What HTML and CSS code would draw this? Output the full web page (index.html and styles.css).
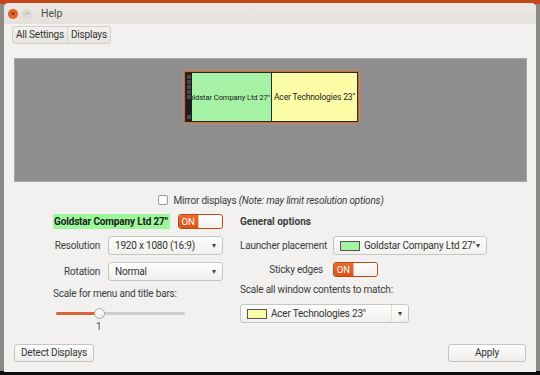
FILE: index.html
```html
<!DOCTYPE html>
<html>
<head>
<meta charset="utf-8">
<link rel="stylesheet" href="styles.css">
</head>
<body>
<div class="window">
  <div class="titlebar">
    <span class="wbtn close">×</span>
    <span class="wbtn min">–</span>
    <span class="title">Help</span>
  </div>
  <div class="toolbar">
    <div class="crumbs"><span class="crumb">All Settings</span><span class="crumb">Displays</span></div>
  </div>
  <div class="arrange">
    <div class="monitors">
      <div class="mon green">
        <div class="launcher"><i></i><i></i><i></i><i></i><i></i><i class="last"></i></div>
        <div class="name-box"><span class="mon-name clip">Goldstar Company Ltd 27"</span></div>
      </div>
      <div class="mon yellow"><span class="mon-name">Acer Technologies 23"</span></div>
    </div>
  </div>
  <div class="mirror">
    <span class="check"></span>
    <span>Mirror displays <em>(Note: may limit resolution options)</em></span>
  </div>
  <div class="columns">
    <div class="col left">
      <div class="head-row">
        <span class="mon-label">Goldstar Company Ltd 27"</span>
        <span class="switch"><span class="on">ON</span><span class="off"></span></span>
      </div>
      <div class="form">
        <span class="lbl">Resolution</span>
        <span class="combo w114"><span class="ctext">1920 x 1080 (16:9)</span><span class="arrow">▾</span></span>
        <span class="lbl">Rotation</span>
        <span class="combo w114"><span class="ctext">Normal</span><span class="arrow">▾</span></span>
      </div>
      <div class="scale-lbl">Scale for menu and title bars:</div>
      <div class="slider"><span class="fill"></span><span class="knob"></span></div>
      <div class="slider-val">1</div>
    </div>
    <div class="col right">
      <div class="gen">General options</div>
      <div class="form rform">
        <span class="lbl">Launcher placement</span>
        <span class="combo w153"><span class="swatch sg"></span><span class="ctext">Goldstar Company Ltd 27"</span><span class="arrow">▾</span></span>
        <span class="lbl">Sticky edges</span>
        <span class="switch"><span class="on">ON</span><span class="off"></span></span>
      </div>
      <div class="scale-lbl">Scale all window contents to match:</div>
      <span class="combo w169 sep"><span class="swatch sy"></span><span class="ctext">Acer Technologies 23"</span><span class="arrow">▾</span></span>
    </div>
  </div>
  <div class="bottom">
    <span class="btn">Detect Displays</span>
    <span class="btn apply">Apply</span>
  </div>
</div>
</body>
</html>
```
FILE: styles.css
```css
* { box-sizing: border-box; }
html, body { margin: 0; padding: 0; }
body {
  width: 540px; height: 375px; overflow: hidden;
  background: linear-gradient(#c2471a 0, #c2471a 4px, #8c8a86 4px, #8c8a86 371px, #0d0d0d 371px);
  font-family: Roboto, "Liberation Sans", sans-serif;
  font-size: 10px;
  letter-spacing: -0.2px;
  color: #3c3c3c;
  padding: 3px 4px 0 4px;
}
.window {
  width: 532px; height: 369px;
  background: #f2f1f0;
  border-radius: 5px 5px 0 0;
  display: flex; flex-direction: column;
  overflow: hidden;
}
.titlebar {
  height: 21px;
  background: linear-gradient(#ece9e4, #e4e1dc);
  display: flex; align-items: center;
  padding-left: 4px;
}
.wbtn {
  width: 10px; height: 10px; border-radius: 50%;
  font-size: 8px; line-height: 10px; text-align: center;
  margin-right: 4px; letter-spacing: 0;
}
.close { background: radial-gradient(#f07746, #df4b16); color: #5a1a02; }
.min { background: #dcd9d4; color: #8a8781; }
.title { margin-left: 5px; color: #4c4c4c; font-size: 10.5px; letter-spacing: 0; }
.toolbar { padding: 2px 0 0 8px; height: 34px; }
.crumbs {
  display: inline-flex;
  border: 1px solid #d2cfca; border-radius: 3px;
  background: linear-gradient(#f3f2f0, #e6e3df);
  height: 18px; align-items: center;
}
.crumb { padding: 0 3px; color: #333; line-height: 16px; }
.crumb + .crumb { border-left: 1px solid #d8d5d0; }
.arrange {
  margin: 0 9px 0 10px;
  height: 124px;
  background: #8e8e8e;
  border: 1px solid #a9a8a6;
  display: flex; justify-content: center; align-items: flex-start;
  padding-top: 13px;
}
.monitors {
  display: flex;
  box-shadow: 0 0 0 1px #c9693a, 0 0 3px 1px #d88a5e;
  margin-left: 2px;
}
.mon {
  height: 50px; display: flex; align-items: center;
  border: 1px solid #2a2a2a; overflow: hidden; color: #222;
}
.green { width: 87px; background: #a5f2a5; }
.yellow { width: 86px; background: #fcfca6; border-left: none; justify-content: center; }
.launcher {
  width: 6px; height: 100%; background: #1c1c1c; flex: none;
  display: flex; flex-direction: column; align-items: center; padding-top: 2px; gap: 1px;
}
.launcher i { width: 4px; height: 4px; background: #4a4a4a; display: block; }
.launcher i.last { margin-top: auto; margin-bottom: 2px; }
.name-box { flex: 1; min-width: 0; overflow: hidden; display: flex; justify-content: flex-end; }
.mon-name { font-size: 8.5px; white-space: nowrap; letter-spacing: -0.15px; }
.clip { font-size: 7.6px; padding-right: 1px; letter-spacing: -0.1px; }
.mirror {
  display: flex; align-items: center; justify-content: center;
  margin-top: 11px; height: 14px; padding-left: 2px; color: #3c3c3c;
}
.check {
  width: 10px; height: 10px; border: 1px solid #9c9a96; border-radius: 2px;
  background: #fff; margin-right: 5px;
}
.columns { display: flex; margin-top: 7px; height: 130px; }
.col.left { width: 183px; margin-left: 49px; }
.col.right { margin-left: 4px; }
.head-row { display: flex; align-items: center; height: 15px; }
.mon-label {
  background: #9bf89b; font-weight: bold; color: #222;
  padding: 0 2px 0 1px; height: 15px; line-height: 15px; white-space: nowrap;
  letter-spacing: -0.15px;
}
.head-row .switch { margin-left: 8px; }
.switch {
  display: inline-flex; width: 45px; height: 15px;
  border-radius: 3px; overflow: hidden;
  border: 1px solid #b64a14; letter-spacing: 0;
}
.switch .on {
  width: 19px; background: linear-gradient(#ec6b2c, #dc531a); color: #fff;
  font-size: 9.5px; line-height: 13px; text-align: center;
}
.switch .off { flex: 1; background: linear-gradient(#fff, #f1efed); border-left: 1px solid #c8c5c0; border-radius: 0 2px 2px 0; }
.form {
  display: grid; grid-template-columns: 47px auto; column-gap: 8px; row-gap: 7px;
  align-items: center; margin-top: 7px;
}
.lbl { text-align: right; color: #3c3c3c; white-space: nowrap; }
.combo {
  display: flex; align-items: center; height: 19px;
  border: 1px solid #c8c5c0; border-radius: 3px;
  background: linear-gradient(#fdfdfc, #f1f0ee);
  padding: 0 6px 0 6px; color: #333; justify-self: start;
}
.w114 { width: 115px; }
.w153 { width: 154px; }
.w169 { width: 169px; }
.ctext { flex: 1; white-space: nowrap; }
.arrow { font-size: 8px; color: #444; }
.swatch { width: 20px; height: 10px; margin-right: 4px; border: 1px solid #555; flex: none; }
.sg { background: #a5f2a5; }
.sy { background: #fcfca6; }
.sep .arrow { border-left: 1px solid #e2dfdb; padding-left: 6px; height: 17px; line-height: 17px; }
.scale-lbl { margin-top: 6px; height: 14px; line-height: 14px; color: #3c3c3c; white-space: nowrap; }
.slider {
  margin: 11px 0 0 3px; width: 129px; height: 3px; background: #cfcdca;
  border-radius: 2px; position: relative;
}
.slider .fill { position: absolute; left: 0; top: 0; height: 3px; width: 43px; background: #d9663a; border-radius: 2px; }
.slider .knob {
  position: absolute; left: 38px; top: -4px; width: 11px; height: 11px;
  border-radius: 50%; background: linear-gradient(#fff, #ecebe9); border: 1px solid #a8a5a0;
}
.slider-val { margin: 6px 0 0 43px; color: #555; }
.gen { font-weight: bold; height: 15px; line-height: 15px; color: #3c3c3c; letter-spacing: 0; }
.rform { grid-template-columns: 83px auto; column-gap: 10px; }
.col.right .sep { margin-top: 7px; }
.bottom { display: flex; justify-content: space-between; padding: 0 10px 0 10px; }
.btn {
  height: 18px; border: 1px solid #c8c5c0; border-radius: 3px;
  background: linear-gradient(#fdfdfc, #efedeb); color: #333;
  padding: 0 6px; line-height: 16px;
}
.apply { width: 78px; text-align: center; }
```
